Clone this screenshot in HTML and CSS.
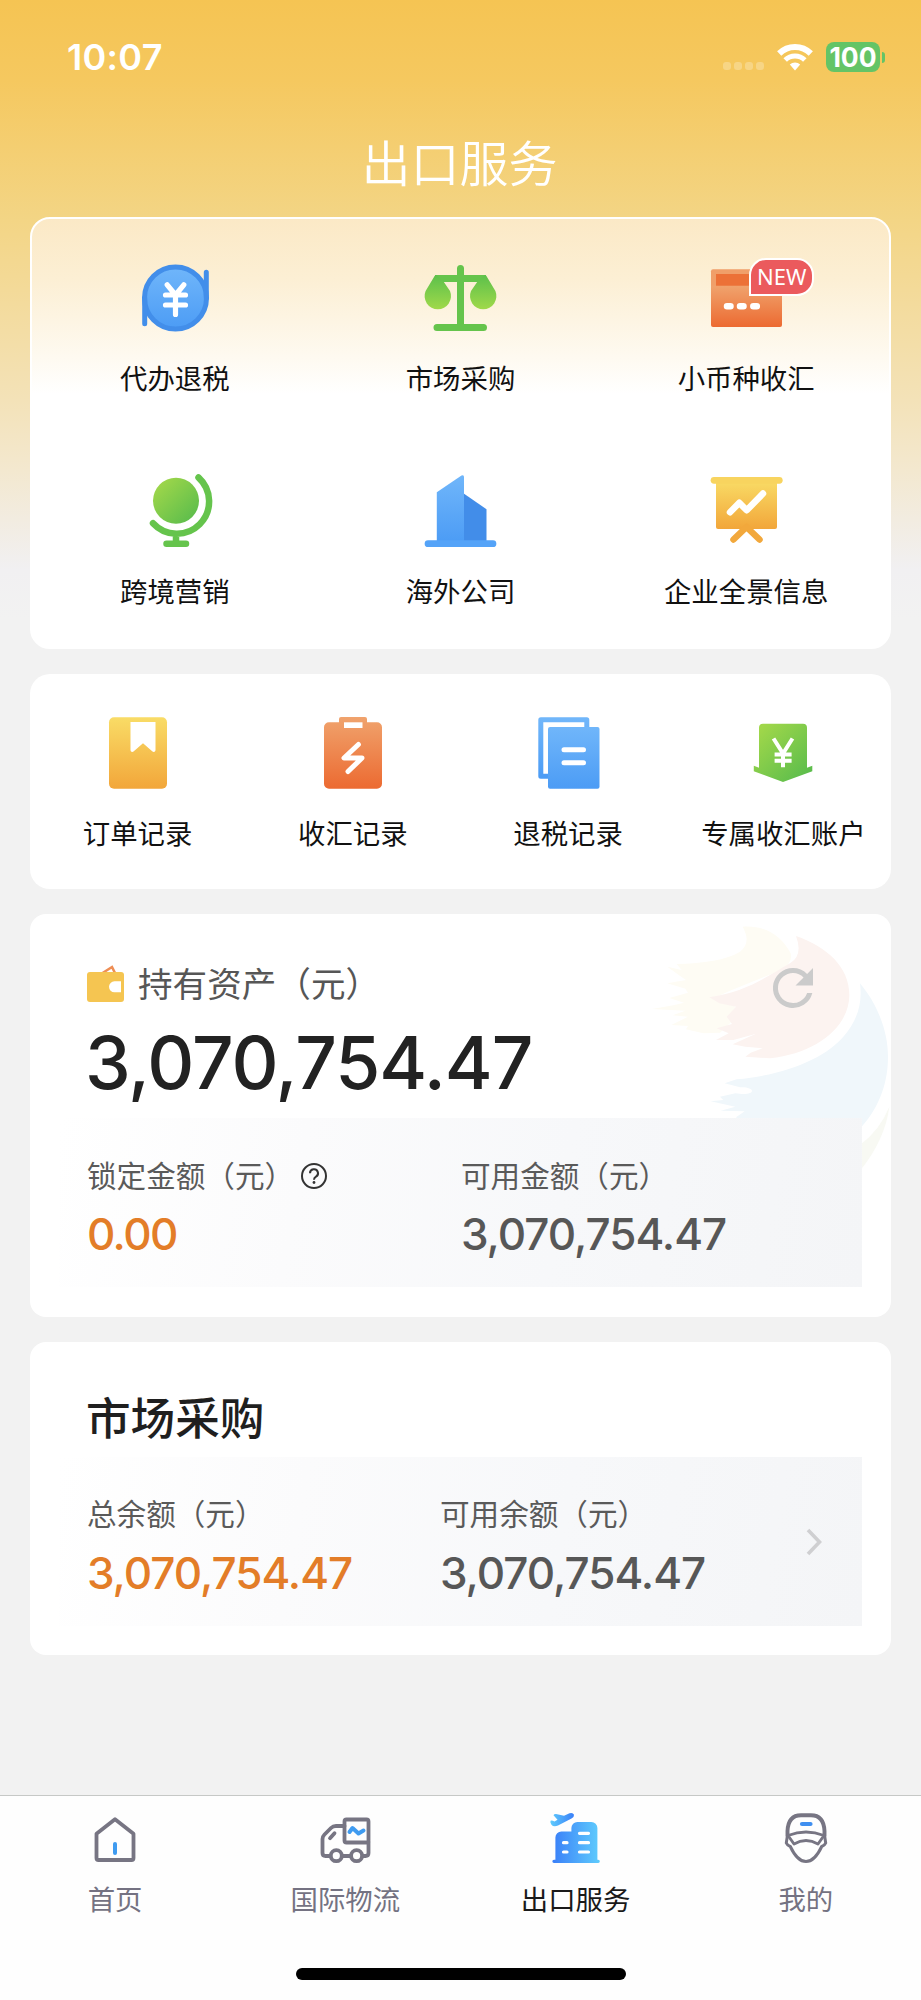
FILE: index.html
```html
<!DOCTYPE html>
<html lang="zh-CN">
<head>
  <meta charset="UTF-8">
  <meta name="viewport" content="width=device-width, initial-scale=1.0">
  <title>出口服务</title>
  <link rel="stylesheet" href="styles.css">
</head>
<body>
  <!-- shared gradients -->
  <svg class="defs" width="0" height="0">
    <defs>
      <linearGradient id="blue" x1="0" y1="0" x2="0" y2="1"><stop offset="0" stop-color="#70b6fa"/><stop offset="1" stop-color="#4c9cf5"/></linearGradient>
      <linearGradient id="orange" x1="0" y1="0" x2="0" y2="1"><stop offset="0" stop-color="#f0a36d"/><stop offset="1" stop-color="#ec6a31"/></linearGradient>
      <linearGradient id="yellow" x1="0" y1="0" x2="0" y2="1"><stop offset="0" stop-color="#f9dc66"/><stop offset="1" stop-color="#f2a63a"/></linearGradient>
      <linearGradient id="green" x1="0" y1="0" x2="0" y2="1"><stop offset="0" stop-color="#5cc04b"/><stop offset="1" stop-color="#a0d94a"/></linearGradient>
      <linearGradient id="greenDiag" x1="0" y1="0" x2="1" y2="1"><stop offset="0.1" stop-color="#a0d74a"/><stop offset="0.9" stop-color="#5cbd4c"/></linearGradient>
      <linearGradient id="sky" x1="0" y1="0" x2="1" y2="0"><stop offset="0" stop-color="#3a7ff8"/><stop offset="1" stop-color="#5fccfd"/></linearGradient>
      <linearGradient id="plane" x1="0" y1="0" x2="1" y2="0"><stop offset="0" stop-color="#5fccfd"/><stop offset="1" stop-color="#3a7ff8"/></linearGradient>
    </defs>
  </svg>

  <div class="page">
    <div class="status-bar">
      <span class="time">10:07</span>
      <div class="status-icons">
        <div class="dots"><i></i><i></i><i></i><i></i></div>
        <svg class="wifi" viewBox="0 0 36 28" fill="none" stroke="#fff">
          <path d="M2.2 10.5a22.5 22.5 0 0 1 31.6 0" stroke-width="6"/>
          <path d="M8.2 17a14 14 0 0 1 19.6 0" stroke-width="5"/>
          <path d="M18 27.5l-5.2-6a7.6 7.6 0 0 1 10.4 0z" fill="#fff" stroke="none"/>
        </svg>
        <div class="battery">100</div>
        <i class="battery-cap"></i>
      </div>
    </div>
    <h1 class="title">出口服务</h1>

    <div class="card services">
      <div class="item">
        <svg class="icon" viewBox="0 0 72 72" fill="none" stroke-linecap="round">
          <circle cx="36.5" cy="36" r="31" fill="url(#blue)"/>
          <circle cx="36.5" cy="36" r="31" stroke="#428eea" stroke-width="5"/>
          <path d="M5.7 36v25.7M67.300 36V10.3" stroke="#428eea" stroke-width="5"/>
          <path d="M28.2 22.8L36.500 33l8.3-10.2M26.500 33h20M26.500 43h20M36.500 33v19.5" stroke="#fff" stroke-width="5.2" stroke-linejoin="round"/>
        </svg>
        <span>代办退税</span>
      </div>
      <div class="item">
        <svg class="icon" viewBox="0 0 72 72">
          <path d="M36.500 6.5v59M13 65.5h46.500" stroke="#65c44c" stroke-width="7" stroke-linecap="round"/>
          <path d="M11 16.5h51" stroke="#65c44c" stroke-width="7"/>
          <path d="M12.500 13C11 13 10.500 14 10 15L1.600 29A13.200 13.200 0 1 0 26 29L19.500 19.500z" fill="url(#green)"/>
          <path d="M60.500 13C62 13 62.500 14 63 15L71.400 29A13.200 13.200 0 1 1 47 29L53.500 19.500z" fill="url(#green)"/>
        </svg>
        <span>市场采购</span>
      </div>
      <div class="item">
        <div class="icon-wrap">
          <svg class="icon" viewBox="0 0 72 72">
            <rect x="1" y="7.300" width="71" height="30" rx="2" fill="#f09f69"/>
            <rect x="6" y="12" width="60" height="13" fill="#ec7137"/>
            <path d="M1 23.700h71V63a2 2 0 0 1-2 2H3a2 2 0 0 1-2-2z" fill="url(#orange)"/>
            <path d="M17 44.300h3.500M30 44.300h3.500M43.300 44.300h3.500" stroke="#fff" stroke-width="6.500" stroke-linecap="round"/>
          </svg>
          <b class="badge">NEW</b>
        </div>
        <span>小币种收汇</span>
      </div>
      <div class="item">
        <svg class="icon" viewBox="0 0 72 72" fill="none" stroke="#65c44c" stroke-width="6.500" stroke-linecap="round">
          <circle cx="37" cy="25.700" r="23" fill="url(#greenDiag)" stroke="none"/>
          <path d="M59.500 2.500A32.280 32.280 0 1 1 14 48.200M37 59v9.500M27.500 68.700h19.500"/>
        </svg>
        <span>跨境营销</span>
      </div>
      <div class="item">
        <svg class="icon" viewBox="0 0 72 72">
          <path d="M39 18l23.500 16.300V67H39z" fill="#428de9"/>
          <path d="M12.800 17.300L37.500 0.500Q40 -0.500 40 2V67H12.800z" fill="url(#blue)"/>
          <path d="M4 68.700h65" stroke="#54a3f8" stroke-width="6.700" stroke-linecap="round"/>
        </svg>
        <span>海外公司</span>
      </div>
      <div class="item">
        <svg class="icon" viewBox="0 0 72 72" fill="none" stroke-linecap="round" stroke-linejoin="round">
          <path d="M6 5h61v47a2 2 0 0 1-2 2H8a2 2 0 0 1-2-2z" fill="url(#yellow)"/>
          <path d="M4 5.300h65.300" stroke="#f8d45f" stroke-width="6.700"/>
          <path d="M23.500 64.500L36.500 52l13 12.500" stroke="#f2a83c" stroke-width="6.500"/>
          <path d="M20 37.300l9.300-9.500 7.400 7.500L53 18.500" stroke="#fff" stroke-width="6.500"/>
        </svg>
        <span>企业全景信息</span>
      </div>
    </div>

    <div class="card records">
      <div class="item">
        <svg class="icon" viewBox="0 0 72 72">
          <rect x="7" y="0.300" width="58" height="71.500" rx="5" fill="url(#yellow)"/>
          <path d="M28.500 5h25v28c0 2-2 2.500-3.300 1.300L41 26.300l-9.200 8C30.500 35.500 28.500 35 28.500 33z" fill="#fff"/>
        </svg>
        <span>订单记录</span>
      </div>
      <div class="item">
        <svg class="icon" viewBox="0 0 72 72">
          <path d="M12 5.300h10V2a2 2 0 0 1 2-2h24a2 2 0 0 1 2 2v3.300h10a5 5 0 0 1 5 5v56.500a5 5 0 0 1-5 5H12a5 5 0 0 1-5-5V10.300a5 5 0 0 1 5-5z" fill="url(#orange)"/>
          <path d="M27 5.300h18.500V11H27z" fill="#fff"/>
          <path d="M41.400 27.500L27 41h18L31 54.500" fill="none" stroke="#fff" stroke-width="5" stroke-linecap="round" stroke-linejoin="round"/>
        </svg>
        <span>收汇记录</span>
      </div>
      <div class="item">
        <svg class="icon" viewBox="0 0 72 72">
          <path d="M18 59.200H8.800V2.800h46V12" fill="none" stroke="url(#blue)" stroke-width="5" stroke-linejoin="round" stroke-linecap="round"/>
          <rect x="16" y="10" width="51.500" height="61.700" rx="2" fill="url(#blue)"/>
          <path d="M32 32.700h19.500M32 45.700h19.500" stroke="#fff" stroke-width="5" stroke-linecap="round"/>
        </svg>
        <span>退税记录</span>
      </div>
      <div class="item">
        <svg class="icon" viewBox="0 0 72 72">
          <path d="M16 6.700h40a4 4 0 0 1 4 4v40l5.300-2v5.500L36 65 6.800 54.200v-5.500l5.200 2v-40a4 4 0 0 1 4-4z" fill="url(#greenDiag)"/>
          <path d="M26.500 21.500L36 36.500l9.500-15M36 35.500v14.800M27.600 37.500h17M27.600 43.700h17" fill="none" stroke="#fff" stroke-width="4"/>
        </svg>
        <span>专属收汇账户</span>
      </div>
    </div>

    <div class="card assets">
      <svg class="brush" viewBox="0 42 993 1209">
        <path d="M548 80C620 75 665 110 692 160Q700 190 660 212L510 272 470 290 525 320 520 360 480 398 430 400 378 388 384 378 334 375 384 350 338 346 376 332 276 327 340 316 372 308 328 294 384 278 376 266 322 250 378 240 352 222 322 200 365 210 350 192C430 190 500 180 540 155Q575 130 548 80z" fill="#fefcf4"/>
        <path d="M708 108C800 140 868 200 868 285C868 380 770 460 630 475L556 470 572 458 608 445 556 440 518 433 586 402 520 420 468 420 506 400 470 385 516 372 500 350 528 320 478 310 448 292C560 275 620 230 690 190Q730 165 708 108z" fill="#fcf3f0"/>
        <path d="M900 250C950 310 984 390 984 470C984 560 950 630 905 680L560 680 528 652 554 634 482 632 526 620 452 604 490 600 480 590 526 580C590 590 590 560 540 562L494 550 530 538C680 525 800 470 850 410Q912 340 900 250z" fill="#f0f7fb"/>
        <path d="M988 620Q975 720 900 812V735Q960 690 988 620z" fill="#f8f9f3"/>
      </svg>
      <div class="assets-head">
        <svg class="wallet" viewBox="0 0 37 37">
          <path d="M14 9L25 2l3.500 7" fill="none" stroke="#ee8e55" stroke-width="2.600"/>
          <rect y="7" width="37" height="30" rx="3" fill="#f5c551"/>
          <path d="M34 16.300v11h-6.500a5.500 5.500 0 0 1 0-11z" fill="#fff"/>
        </svg>
        <span>持有资产（元）</span>
        <svg class="refresh" viewBox="0 0 24 24"><path d="M17.650 6.350A7.958 7.958 0 0 0 12 4a8 8 0 1 0 7.730 10h-2.080A6 6 0 1 1 12 6c1.660 0 3.140.69 4.220 1.780L13 11h7V4z" fill="#cbcbcb"/></svg>
      </div>
      <div class="total">3,070,754.47</div>
      <div class="panel">
        <div class="col">
          <div class="label">锁定金额（元）
            <svg class="help" viewBox="0 0 28 28" fill="none" stroke="#333" stroke-width="2">
              <circle cx="14" cy="14" r="12"/>
              <path d="M10 11.300a4 4 0 1 1 6 3.400c-1.500.9-2 1.500-2 3"/>
              <circle cx="14" cy="20.500" r="1.400" fill="#333" stroke="none"/>
            </svg>
          </div>
          <div class="value orange zero">0.00</div>
        </div>
        <div class="col">
          <div class="label">可用金额（元）</div>
          <div class="value">3,070,754.47</div>
        </div>
      </div>
    </div>

    <div class="card market">
      <h2>市场采购</h2>
      <div class="panel">
        <div class="col">
          <div class="label">总余额（元）</div>
          <div class="value orange">3,070,754.47</div>
        </div>
        <div class="col">
          <div class="label">可用余额（元）</div>
          <div class="value">3,070,754.47</div>
        </div>
        <svg class="arrow" viewBox="0 0 16 28"><path d="M2 2l11.500 12L2 26" fill="none" stroke="#cfcfd1" stroke-width="3.600"/></svg>
      </div>
    </div>

    <div class="tab-bar">
      <div class="tabs">
        <div class="tab">
          <svg viewBox="0 0 50 50" fill="none" stroke="#777583" stroke-width="3.800" stroke-linejoin="round" stroke-linecap="round">
            <path d="M25 6.200l18.500 14.500V45a2 2 0 0 1-2 2h-33a2 2 0 0 1-2-2V20.700z"/>
            <path d="M25 31v9" stroke="#3f9bf0" stroke-width="4"/>
          </svg>
          <span>首页</span>
        </div>
        <div class="tab">
          <svg viewBox="0 0 50 50" fill="none" stroke="#777583" stroke-width="3.800" stroke-linejoin="round" stroke-linecap="round">
            <rect x="24.500" y="6.500" width="24" height="23" rx="2"/>
            <path d="M24.500 13H16q-3 0-5 2L4.500 21.500q-2 2-2 4.500V40q0 3 3 3h4.500M22.500 43h8M43 43h2.500q3 0 3-3V29M10 25.200l4.500-5"/>
            <circle cx="16.300" cy="42.700" r="5.500"/>
            <circle cx="36.600" cy="42.700" r="5.500"/>
            <path d="M29.500 19l3-4 6 5.500 5-3" stroke="#3f9bf0" stroke-width="4"/>
          </svg>
          <span>国际物流</span>
        </div>
        <div class="tab active">
          <svg viewBox="0 0 50 50">
            <path d="M3 46.700h1.400V24.500a6 6 0 0 1 6-6h10V15a6 6 0 0 1 6-6h14a6 6 0 0 1 6 6v31.700h.8a1.600 1.600 0 0 1 0 3.300H3a1.600 1.600 0 0 1 0-3.300z" fill="url(#sky)"/>
            <path d="M12.500 29.700h3.500M12.500 39h3.500M28.500 20.300h9M28.500 29.700h9M28.500 39h9" stroke="#fff" stroke-width="3.200" stroke-linecap="round"/>
            <path d="M2.500 2.200Q3 .8 5 .9L13 2.700 18.500.3Q22-.6 23 1.700 23.300 4 20.500 5.500L7 12.600Q2.500 14.500.3 11.500-1.200 8.800-.4 7.700q1.400-.6 3.900.8L6.500 6.800z" fill="url(#plane)"/>
          </svg>
          <span>出口服务</span>
        </div>
        <div class="tab">
          <svg viewBox="0 0 50 50" fill="none" stroke="#777583" stroke-linejoin="round" stroke-linecap="round">
            <path d="M6.500 22.500V18C7 7 12 2.200 20 2.200h10c8 0 13 4.800 13.500 15.800v4.500" stroke-width="3.900"/>
            <path d="M7 22.500Q25 15.500 43 22.500L37 31Q25 24 13 31z" stroke-width="2.900"/>
            <path d="M6.500 22L5.300 30q1 2.500 4 3.500C13.500 42.500 19 48.500 25 48.500s11.500-6 15.700-15q3-1 4-3.500L43.500 22" stroke-width="3"/>
            <path d="M21 11h8.500" stroke="#3f8ff0" stroke-width="4.200"/>
          </svg>
          <span>我的</span>
        </div>
      </div>
      <div class="home-indicator"></div>
    </div>
  </div>
</body>
</html>
```
FILE: styles.css
```css
* {
  box-sizing: border-box;
}
body {
  margin: 0;
  font-family: "Noto Sans CJK SC", sans-serif;
  color: #111;
}
.defs {
  position: absolute;
}
.page {
  width: 921px;
  height: 2000px;
  display: flex;
  flex-direction: column;
  background: linear-gradient(180deg, #f5c453 0, #f5c85f 80px, #f3d585 220px, #f3e2b8 400px, #f3e8cf 470px, #f1f0f2 570px, #f2f2f2 620px);
}
svg {
  display: block;
  flex-shrink: 0;
}

/* status bar */
.status-bar {
  height: 114px;
  padding: 0 36px 0 67px;
  display: flex;
  justify-content: space-between;
  align-items: center;
  color: #fff;
  font-family: Inter, sans-serif;
}
.time {
  font-size: 36px;
  font-weight: 600;
  letter-spacing: 0.3px;
}
.status-icons {
  display: flex;
  align-items: center;
}
.dots {
  display: flex;
  gap: 3px;
  margin: 18px 13px 0 0;
}
.dots i {
  width: 8px;
  height: 8px;
  border-radius: 3px;
  background: rgba(255, 255, 255, 0.25);
}
.wifi {
  width: 36px;
  height: 28px;
  margin-right: 13px;
}
.battery {
  width: 54px;
  height: 30px;
  line-height: 30px;
  border-radius: 8px;
  background: #64c466;
  text-align: center;
  font-size: 26.500px;
  font-weight: 700;
}
.battery-cap {
  width: 3px;
  height: 11px;
  margin-left: 2px;
  border-radius: 0 3px 3px 0;
  background: #64c466;
}
.title {
  margin: 0;
  height: 103px;
  padding-right: 2px;
  line-height: 94px;
  text-align: center;
  color: #fff;
  font-size: 49px;
  font-weight: 350;
}

/* cards */
.card {
  position: relative;
  margin: 0 30px 25px;
  background: #fff;
  border-radius: 16px;
}
.services {
  height: 432px;
  padding-top: 43px;
  border: 2px solid #fff;
  border-radius: 20px;
  background: linear-gradient(180deg, #fbe9c6 0, #fcefd4 60px, #fefaf1 140px, #fff 175px);
  display: grid;
  grid-template-columns: repeat(3, 1fr);
  grid-auto-rows: 132px;
  row-gap: 81px;
}
.records {
  height: 215px;
  padding-top: 43px;
  border-radius: 20px;
  display: grid;
  grid-template-columns: repeat(4, 1fr);
}
.item {
  display: flex;
  flex-direction: column;
  align-items: center;
  gap: 26px;
}
.item span {
  line-height: 34px;
  font-size: 27.400px;
  font-weight: 400;
  white-space: nowrap;
}
.icon {
  width: 72px;
  height: 72px;
  overflow: visible;
}
.icon-wrap {
  position: relative;
}
.badge {
  position: absolute;
  left: 39px;
  top: -4px;
  width: 65px;
  height: 38px;
  line-height: 33px;
  border: 2px solid #fff;
  border-radius: 17px 17px 17px 0;
  background: #eb5a5d;
  color: #fff;
  text-align: center;
  font-family: "Noto Sans", sans-serif;
  font-size: 22px;
  font-weight: 400;
}

/* assets */
.assets {
  height: 403px;
  padding: 45px 29px 0;
}
.brush {
  position: absolute;
  left: 530px;
  top: 0;
  width: 331px;
  height: 403px;
}
.assets-head {
  position: relative;
  height: 60px;
  padding: 0 8px 0 28px;
  display: flex;
  align-items: center;
  font-size: 34.600px;
  line-height: 46px;
  color: #565656;
}
.wallet {
  width: 37px;
  height: 37px;
  margin: -11px 14px 0 0;
}
.assets-head span {
  margin-top: -15px;
}
.refresh {
  width: 60px;
  height: 60px;
  margin: -2px 31px 0 auto;
}
.total {
  position: relative;
  height: 99px;
  line-height: 87px;
  padding-left: 26px;
  color: #222;
  font-family: Inter, sans-serif;
  font-size: 73px;
  font-weight: 500;
  letter-spacing: -1.050px;
}
.panel {
  position: relative;
  height: 169px;
  padding: 41px 27px 0 28px;
  display: flex;
  background: linear-gradient(100deg, #fff 0, #fbfbfc 30%, #f7f8fa 62%, #f4f5f7 100%);
}
.col {
  flex: 1;
}
.label {
  display: flex;
  align-items: center;
  height: 32px;
  font-size: 29.600px;
  line-height: 32px;
  color: #5a5a5a;
  white-space: nowrap;
}
.help {
  width: 28px;
  height: 28px;
  margin-left: 6px;
  margin-top: 2px;
}
.value {
  margin-top: 16px;
  line-height: 54px;
  color: #575757;
  font-family: Inter, sans-serif;
  font-size: 44px;
  font-weight: 500;
  letter-spacing: -1px;
}
.zero {
  letter-spacing: -1.600px;
}
.orange {
  color: #e37d28;
}

/* market */
.market {
  height: 313px;
  padding: 44px 29px 0;
  margin-bottom: 0;
}
.market h2 {
  margin: 0;
  height: 71px;
  padding-left: 27px;
  line-height: 60px;
  color: #1f1f1f;
  font-size: 44.600px;
  font-weight: 500;
}
.market .panel {
  padding-top: 40px;
}
.market .value {
  margin-top: 17px;
}
.arrow {
  width: 16px;
  height: 28px;
  margin: 31px 13px 0 13px;
}

/* bottom tabs */
.tab-bar {
  margin-top: auto;
  height: 205px;
  padding-top: 17px;
  border-top: 1px solid #c6c8c6;
  background: #fefefe;
}
.tabs {
  display: grid;
  grid-template-columns: repeat(4, 1fr);
  height: 155px;
}
.tab {
  display: flex;
  flex-direction: column;
  align-items: center;
  gap: 18px;
  color: #747282;
  font-size: 27.400px;
  line-height: 34px;
}
.tab svg {
  width: 50px;
  height: 50px;
  overflow: visible;
}
.active {
  color: #1a1a1a;
}
.home-indicator {
  width: 330px;
  height: 12px;
  margin: 0 auto;
  border-radius: 6px;
  background: #000;
}
```
